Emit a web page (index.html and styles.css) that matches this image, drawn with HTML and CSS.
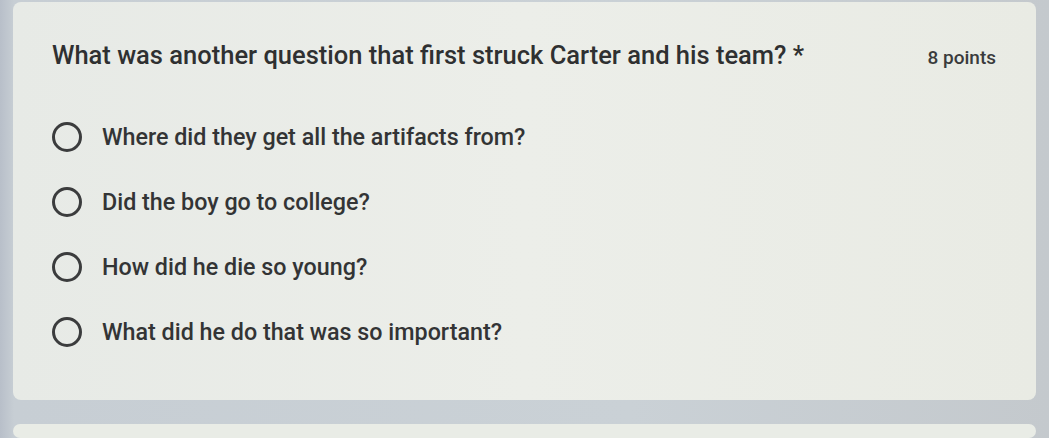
FILE: index.html
```html
<!DOCTYPE html>
<html>
<head>
<meta charset="utf-8">
<link rel="stylesheet" href="styles.css">
</head>
<body>
<div class="page">
  <div class="card">
    <div class="header">
      <div class="title">What was another question that first struck Carter and his team? <span class="req">*</span></div>
      <div class="points">8 points</div>
    </div>
    <div class="options">
      <label class="opt"><span class="radio"></span><span class="txt">Where did they get all the artifacts from?</span></label>
      <label class="opt"><span class="radio"></span><span class="txt">Did the boy go to college?</span></label>
      <label class="opt"><span class="radio"></span><span class="txt">How did he die so young?</span></label>
      <label class="opt"><span class="radio"></span><span class="txt">What did he do that was so important?</span></label>
    </div>
  </div>
  <div class="card next"></div>
</div>
</body>
</html>
```
FILE: styles.css
```css
html, body { margin: 0; padding: 0; }
body {
  width: 1049px;
  height: 438px;
  overflow: hidden;
  background: linear-gradient(90deg, #b8bfc9 0px, #c7ced4 14px, #cad1d6 60%, #c4c9cd 100%);
  font-family: Roboto, "Noto Sans", sans-serif;
  color: #353637;
}
.page {
  padding: 2px 13px 0 13px;
  display: flex;
  flex-direction: column;
  gap: 24px;
}
.card {
  background: linear-gradient(90deg, #e7eae6 0%, #eceee9 50%, #e9ebe4 100%);
  border-radius: 8px;
  height: 398px;
  flex: none;
  box-sizing: border-box;
  padding: 38px 40px 0 39px;
}
.card.next { height: 14px; padding: 0; background: #e9ece6; }
.header {
  display: flex;
  justify-content: space-between;
  align-items: baseline;
}
.title {
  font-size: 25.5px;
  line-height: 30px;
  font-weight: 500;
  color: #2f3031;
}
.req { color: #2f3031; }
.points {
  font-size: 19px;
  font-weight: 500;
  color: #3a3b3c;
}
.options {
  display: flex;
  flex-direction: column;
  gap: 35px;
  margin-top: 52px;
}
.opt {
  display: flex;
  align-items: center;
  gap: 20px;
  height: 30px;
}
.radio {
  width: 24px;
  height: 24px;
  border: 3px solid #3b3c3d;
  border-radius: 50%;
  flex: none;
}
.txt {
  font-size: 23.3px;
  font-weight: 500;
  color: #333435;
}
```
